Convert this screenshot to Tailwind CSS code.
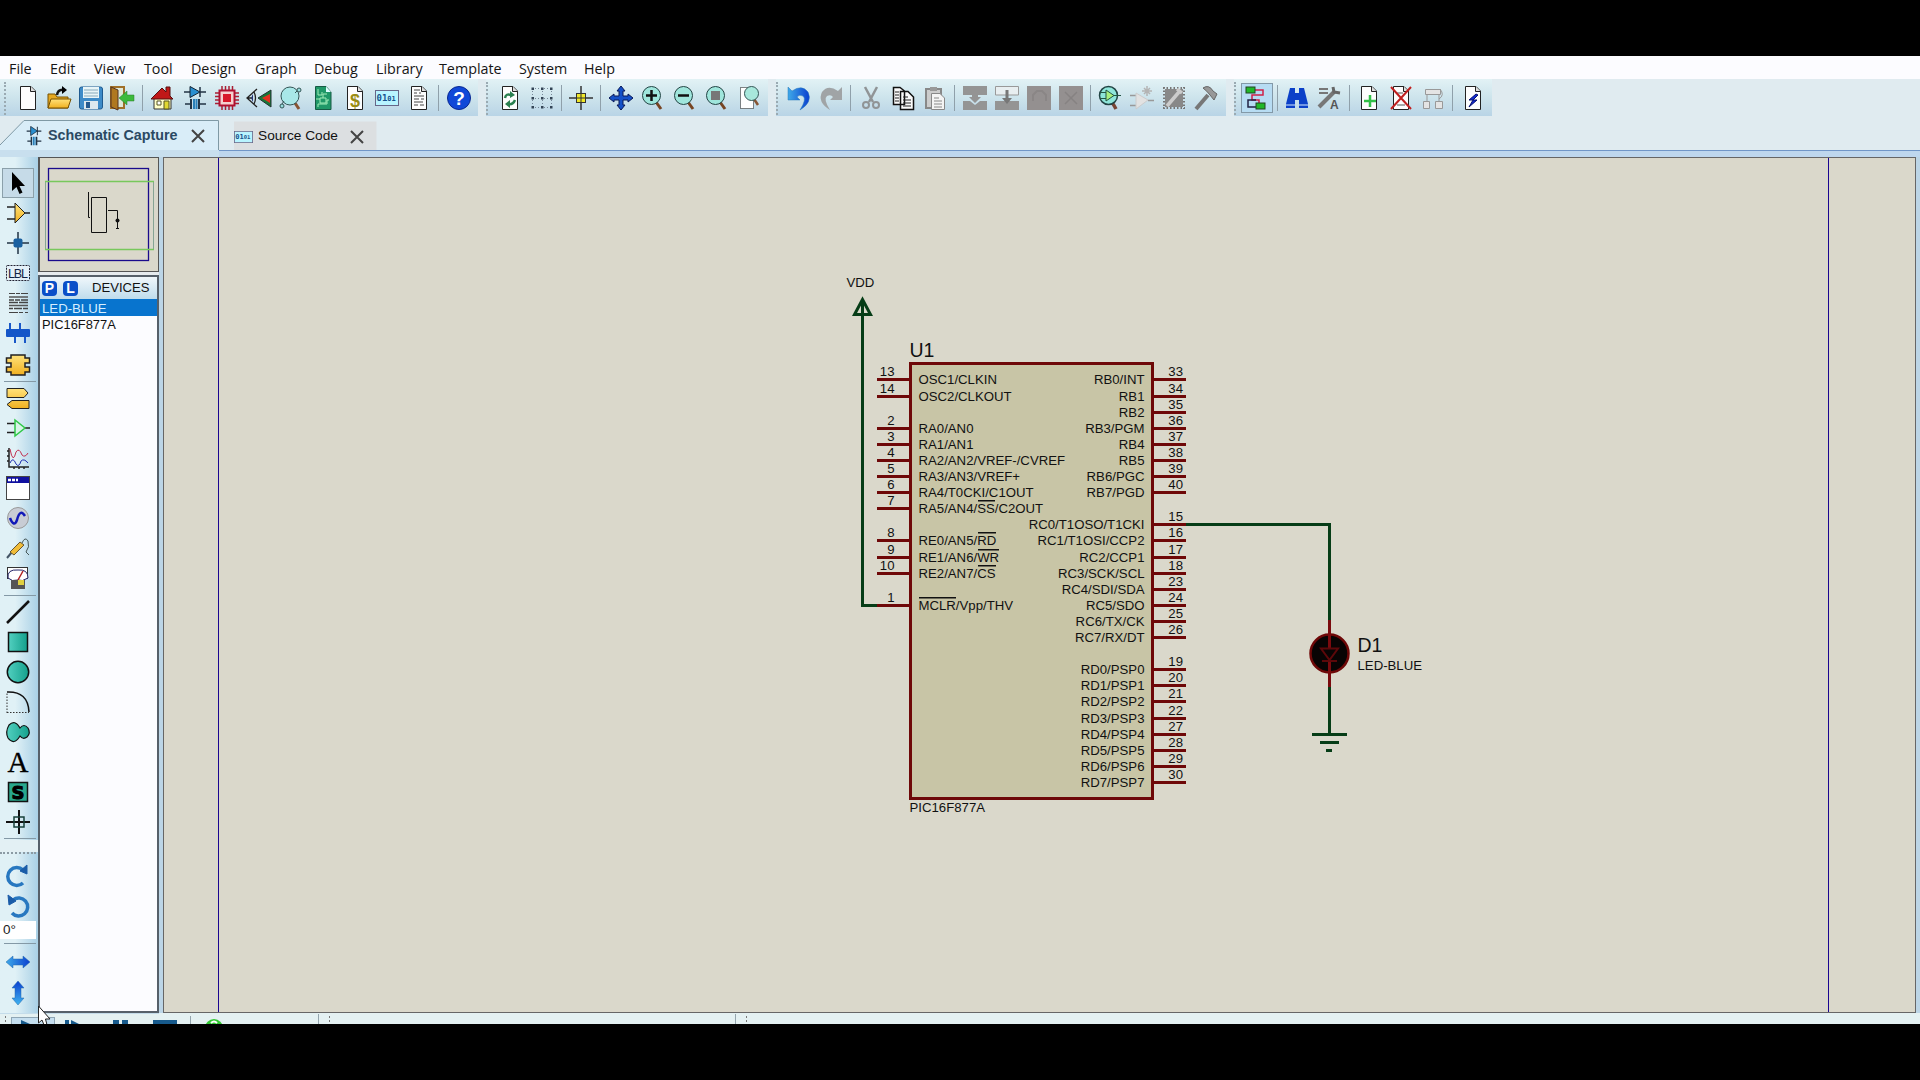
<!DOCTYPE html>
<html lang="en">
<head>
<meta charset="utf-8">
<title>Schematic Capture</title>
<script src="https://cdn.jsdelivr.net/npm/@tailwindcss/browser@4"></script>
</head>
<body class="w-[1920px] h-[1080px] overflow-hidden bg-black font-['Liberation_Sans',Arial,sans-serif]">
<svg width="0" height="0" class="absolute">
  <defs>
    <linearGradient id="gb" x1="0" x2="1"><stop offset="0" stop-color="#3fa9e8"/><stop offset="1" stop-color="#0a3fd0"/></linearGradient>
    <linearGradient id="gv" x1="0" x2="0" y1="0" y2="1"><stop offset="0" stop-color="#0a3fd0"/><stop offset="1" stop-color="#3fb4f0"/></linearGradient>
    <linearGradient id="gt" x1="0" x2="1"><stop offset="0" stop-color="#52d0c0"/><stop offset="1" stop-color="#14a08c"/></linearGradient>
    <linearGradient id="gy" x1="0" x2="0" y1="0" y2="1"><stop offset="0" stop-color="#ffe27a"/><stop offset="1" stop-color="#f0b020"/></linearGradient>
  </defs>
</svg>
<div class="flex flex-col mt-14 w-full h-[968px] overflow-hidden bg-[#e0ebf0]">
  <nav class="flex shrink-0 h-[23px] bg-[#fcfcff] pl-[9px] text-[14.3px] leading-[25px] font-['Open_Sans','Noto_Sans',sans-serif] text-[#151515] whitespace-nowrap">
    <span class="w-[41px]">File</span><span class="w-11">Edit</span><span class="w-[50px]">View</span><span class="w-[47px]">Tool</span><span class="w-16">Design</span><span class="w-[59px]">Graph</span><span class="w-[62px]">Debug</span><span class="w-[63px]">Library</span><span class="w-20">Template</span><span class="w-[65px]">System</span><span>Help</span>
  </nav>
  <div id="bars" class="flex shrink-0 h-[37px]"></div>
  <div class="flex shrink-0 h-[34px] relative">
    <svg class="absolute left-0 top-0" width="1920" height="34"><path d="M0 29 24 4.500H218.500V34H0Z" fill="#d9edf8"/><path d="M0 29 24 4.500H218.500V34" fill="none" stroke="#7f99a5"/><path d="M234 5.500H376.500V34H234Z" fill="#dcdfe1"/></svg>
    <div class="relative flex items-center w-[219px] pl-[26px] pt-[6px] text-[14.3px] font-bold text-[#2b4963]"><span id="tab1" class="w-4 mr-[6px]"></span><span class="w-[131px] whitespace-nowrap">Schematic Capture</span>
      <svg class="ml-3" width="14" height="14"><path d="M1 1 13 13M13 1 1 13" stroke="#444" stroke-width="2"/></svg></div>
    <div class="relative flex items-center pl-[15px] pt-[7px] text-[13.7px] text-[#111]"><span id="tab2" class="w-[18px] mr-[6px]"></span><span class="w-[79px] whitespace-nowrap">Source Code</span>
      <svg class="ml-[13px]" width="14" height="14"><path d="M1 1 13 13M13 1 1 13" stroke="#444" stroke-width="2"/></svg></div>
  </div>
  <div class="flex shrink-0 h-[7px]"><div class="w-[219px] bg-[#c8dfee]"></div><div class="grow border-t border-[#7096c8] bg-[#bed7ee]"></div></div>
  <div class="flex shrink-0 h-[856px] bg-[#bcd5e6]">
    <aside id="tools" class="flex flex-col w-[38px] shrink-0 pt-[11px] bg-linear-to-r from-[#e0f1f6] from-40% to-[#a9d0e6]"></aside>
    <div class="flex flex-col shrink-0 w-[121px]">
      <svg class="shrink-0 bg-[#dad8cb] border border-[#555] border-l-2" width="121" height="115" viewBox="40 158 118 113"><rect x="48.500" y="168.500" width="100" height="92" fill="none" stroke="#1a0a8c" stroke-width="1.300"/><path d="M45.500 181.500V249.500M153.500 181.500V249.500" stroke="#86a494"/><path d="M45 181.500H154M45 249.500H154" stroke="#78c85c" stroke-width="1.300"/><path d="M88.500 192V217.500H90M91.500 197.500H106.500V232.500H91.500ZM108 210.500H117.500V229M116 219.500H119M116 228.500H119" fill="none" stroke="#111"/><circle cx="117.500" cy="220.500" r="2" fill="#111"/></svg>
      <div class="h-[3px] bg-[#e6ebee]"></div>
      <div class="flex flex-col grow border-2 border-[#56606a] bg-[#fcfcff] text-[#111]">
        <div class="flex items-center h-[22px] pl-[2px] bg-linear-to-b from-[#f0f7fb] to-[#bfdcec]">
          <b class="grid place-items-center w-[15px] h-[15px] rounded bg-[#0a4fc8] text-white text-sm leading-none">P</b>
          <b class="grid place-items-center w-[15px] h-[15px] rounded bg-[#0a4fc8] text-white text-sm leading-none ml-[6px]">L</b>
          <span class="ml-[14px] text-[13.1px]">DEVICES</span>
        </div>
        <div class="h-[17px] pl-[2px] bg-[#0874ce] text-[#d8efff] text-[13.200px] leading-[19px]">LED-BLUE</div>
        <div class="h-[17px] pl-[2px] text-[12.900px] leading-[17px]">PIC16F877A</div>
      </div>
    </div>
    <main class="ml-1 w-[1753px] h-full border border-[#666] bg-[#dad8cb]">
      <svg id="sch" width="1751" height="854" viewBox="164 158 1751 854" font-size="13.200" fill="#111" class="block"></svg>
    </main>
  </div>
  <div class="flex shrink-0 h-[11px] bg-[#e4f1f2]">
    <svg width="1920" height="11" viewBox="0 1013 1920 11"><path d="M0 1013H159V1014H0Z" fill="#c4dcea"/><rect x="11.500" y="1017.500" width="43" height="12" fill="#c5dff0" stroke="#8fa6b5"/><path d="M21 1020 30 1024H21ZM65 1020H69V1024H65ZM71 1020 79 1024H71ZM113 1020H119V1024H113ZM122 1020H128V1024H122ZM153 1020H177V1024H153Z" fill="#175a8c"/><circle cx="214" cy="1028" r="9" fill="#32c832"/><path d="M211 1023Q214 1020 217 1023" stroke="white" stroke-width="2" fill="none"/><path d="M190.500 1016V1024M318.500 1014V1024M735.500 1014V1024" stroke="#94a5ad"/><path d="M5.500 1016V1024M329.500 1016V1024M746.500 1016V1024" stroke="#777" stroke-dasharray="2 2"/></svg>
  </div>
</div>
<svg class="absolute left-[37px] top-[1005px]" width="20" height="19" viewBox="0 0 20 19"><path d="M1.500 1V18L5 15 7 20H10L8.500 14H13Z" fill="#fff" stroke="#222"/></svg>
<script>
const page = '<path d="M4.500.500H15L19.500 5V23.500H4.500Z" fill="#fdfdfd" stroke="#222"/><path d="M14.500.500V5.500H19.500" fill="#ddd" stroke="#222"/>';
const lens = '<path d="M15 16 20 23" stroke="#774422" stroke-width="3"/><circle cx="10.500" cy="9.500" r="9" fill="#9fe6dc" stroke="#244"/>';
const dev = '<path d="M1 6H7M17 6H23M2 18H8M15 18H23M17 1V11" stroke="#234" stroke-width="1.500"/><path d="M7 .500V11.500L17 6Z" fill="#2a8fd0" stroke="#123"/><path d="M8 13V23M16 13V23" stroke="#234" stroke-width="2"/><path d="M11 13V23M13.500 13V23" stroke="#2a7fb8" stroke-width="2"/>';
const bin = '<rect x=".500" y="4.500" width="23" height="15" fill="#b8f4ff" stroke="#668"/><text x="1.500" y="15" font-family="DejaVu Sans Mono" font-weight="bold" font-size="9" fill="#17518c">01<tspan font-size="7">01</tspan></text>';
const I = {
 new: page,
 open: '<path d="M1 22V8H8L10 11H21V22Z" fill="#e5a820" stroke="#765000"/><path d="M1 22 4 13H24L21 22Z" fill="url(#gy)" stroke="#765000"/><path d="M10 9Q11 3 17 4" fill="none" stroke="#111" stroke-width="2.500"/><path d="M15 0 20 4 15 8Z"/>',
 save: '<rect x=".500" y="1" width="23" height="22" rx="2" fill="#3d8bc8" stroke="#1f5b90"/><rect x="4" y="1" width="16" height="11" fill="#e8f5f8"/><path d="M5 4H19M5 7H19M5 10H19" stroke="#8ab"/><rect x="5" y="15" width="14" height="8" fill="#dce8ee"/><rect x="7" y="16" width="4" height="6" fill="#245a90"/>',
 exit: '<path d="M1 1H14V22H1Z" fill="#dfe8d8" stroke="#a07028" stroke-width="2"/><path d="M1 1 8 4V24L1 21Z" fill="#b07820" stroke="#532"/><path d="M24 9V15H17V19L9 12 17 5V9Z" fill="#3cba3c" stroke="#287828" stroke-width=".500"/>',
 home: '<path d="M3 12H20V23H3Z" fill="#ffffc8" stroke="#333"/><path d="M0 13 11 2 15 6V1H19V10L22 13Z" fill="#c01818" stroke="#511"/><path d="M6 15H10V19H6Z" fill="#fff" stroke="#552"/><path d="M13 15H18V23H13Z" fill="#e0d830" stroke="#552"/>',
 dev,
 pcb: '<path d="M7 0V24M10.500 0V24M14 0V24M17.500 0V24M0 7H24M0 10.500H24M0 14H24M0 17.500H24" stroke="#a82035" stroke-width="1.500"/><rect x="4.500" y="4.500" width="15" height="15" fill="#f5d0d0" stroke="#b01030" stroke-width="2"/><rect x="8" y="8" width="8" height="8" fill="#d8182a"/>',
 eye: '<path d="M10 3 0 12 10 21M1 12H5M7 6Q10 12 7 18" fill="none" stroke="#222" stroke-width="1.300"/><path d="M6 8V16Q3 12 6 8" fill="#237"/><path d="M11 12 24 4V21Z" fill="#187838" stroke="#233"/><path d="M15 12 23 8V17Z" fill="#e53020"/>',
 find: '<path d="M16 17 20 23" stroke="#853" stroke-width="3"/><circle cx="11" cy="10" r="9" fill="#a8e8e8" stroke="#355"/><circle cx="3" cy="20" r="2" fill="#9dd" stroke="#355"/><circle cx="20" cy="4" r="2" fill="#9dd" stroke="#355"/><path d="M3 18 5 15M18 5 16 7" stroke="#355"/>',
 board: '<path d="M4.500 .500H15L20 6V23.500H4.500Z" fill="#209868" stroke="#175a45"/><path d="M15 .500V6H20Z" fill="#dff"/><path d="M7 3V9H11V6M7 21V18H16V14H18M9 12H15V17H9ZM5 13H9M12 12V8H16" fill="none" stroke="#a0edb8"/>',
 bom: page+'<text x="7" y="21" font-size="18" font-weight="bold" fill="#9a8c14">$</text>',
 bin,
 rep: page+'<path d="M7 4H13M7 7H10M12 7H14M7 10H17M7 13H12M14 13H17M7 16H16M7 19H11M13 19H17" stroke="#444"/>',
 help: '<circle cx="12" cy="12" r="11.500" fill="#1048d8" stroke="#092890"/><text x="12" y="19" text-anchor="middle" font-size="19" font-weight="bold" fill="#fff">?</text>',
 refresh: page+'<path d="M7 12Q8 7 13 9M17 14Q15 19 10 18" fill="none" stroke="#2a8050" stroke-width="2.500"/><path d="M12 5 17 9 12 12ZM12 14 7 18 12 22Z" fill="#2a8050"/>',
 grid: '<path d="M2 2.500H22M2 12.500H22M2 21.500H22M2.500 2V22M12.500 2V22M21.500 2V22" stroke="#789" stroke-dasharray="1 2"/><path d="M1.500 1.500h2.500v2.500h-2.500zM11 1.500h2.500v2.500h-2.500zM20 1.500h2.500v2.500h-2.500zM1.500 11h2.500v2.500h-2.500zM11 11h2.500v2.500h-2.500zM20 11h2.500v2.500h-2.500zM1.500 20h2.500v2.500h-2.500zM11 20h2.500v2.500h-2.500zM20 20h2.500v2.500h-2.500z" fill="#345"/>',
 origin: '<path d="M0 12H24M12 0V24" stroke="#333" stroke-width="1.500"/><rect x="7.500" y="7.500" width="9" height="9" fill="#f0e828" stroke="#333"/><path d="M12 7V17M7 12H17" stroke="#333"/>',
 pan: '<path d="M12 0 16 5H14V10H19V8L24 12 19 16V14H14V19H16L12 24 8 19H10V14H5V16L0 12 5 8V10H10V5H8Z" fill="#1450c8" stroke="#081858"/>',
 zin: lens+'<path d="M5 9.500H16M10.500 4V15" stroke="#111" stroke-width="2.500"/>',
 zout: lens+'<path d="M5 9.500H16" stroke="#111" stroke-width="2.500"/>',
 zall: lens+'<rect x="6" y="5" width="9" height="9" fill="#777"/>',
 zarea: '<rect x="1.500" y="1.500" width="13" height="21" fill="#fff" stroke="#111" stroke-dasharray="1 1"/><path d="M15 13 19 19" stroke="#853" stroke-width="2.500"/><circle cx="12.500" cy="7.500" r="7" fill="#a8e8dc" stroke="#355"/>',
 undo: '<path d="M1 1 5 5Q15-2 21 6 26 16 13 24 20 13 16 10 12 8 10 11L13 14H1Z" fill="url(#gb)" stroke="#2878b8" stroke-width=".500"/>',
 redo: '<path d="M23 1 19 5Q9-2 3 6-2 16 11 24 4 13 8 10 12 8 14 11L11 14H23Z" fill="#a0a4a6"/>',
 cut: '<path d="M6 1 14 16M18 1 10 16" stroke="#909496" stroke-width="2.500"/><circle cx="7" cy="19" r="3" fill="none" stroke="#909496" stroke-width="2"/><circle cx="17" cy="19" r="3" fill="none" stroke="#909496" stroke-width="2"/>',
 copy: '<path d="M2.500 1.500H9L13.500 5V18.500H2.500ZM9.500 5.500H17L22.500 11V23.500H9.500Z" fill="#fafafa" stroke="#111" stroke-width="1.500"/><path d="M4 6H8M4 9H8M4 12H8M4 15H8M12 11H17M12 14H20M12 17H20M12 20H20" stroke="#222"/>',
 paste: '<path d="M3 3H18V22H3Z" fill="#ccc" stroke="#888" stroke-width="2"/><path d="M7 1H14V5H7Z" fill="#999"/><path d="M8.500 7.500H17L21.500 12V23.500H8.500Z" fill="#f4f4f4" stroke="#888"/><path d="M11 12H16M11 15H19M11 18H19M11 21H19" stroke="#888"/>',
 bcopy: '<path d="M0 0H24V9H15V11H18L12 17 6 11H9V9H0ZM0 15H7L12 19 17 15H24V24H0Z" fill="#949494"/>',
 bmove: '<path d="M.500 9V.500H23.500V9Z" fill="#e8eef0" stroke="#999"/><path d="M0 15H24V24H0Z" fill="#949494"/><path d="M10.500 4H13.500V12H17L12 18 7 12H10.500Z" fill="#777"/>',
 brot: '<rect width="24" height="24" fill="#949090"/><path d="M6 15V9L10 5H15L19 9V15" fill="none" stroke="#8a8686" stroke-width="2"/>',
 bdel: '<rect width="24" height="24" fill="#949090"/><path d="M6 6 18 18M18 6 6 18" stroke="#868282" stroke-width="1.500"/>',
 pick: '<path d="M14 16 18 23" stroke="#743" stroke-width="3.500"/><circle cx="10.500" cy="9.500" r="9" fill="#8ee6da" stroke="#244" stroke-width="1.500"/><path d="M2 6.500H8M2 12.500H8M14 9.500H23" stroke="#254"/><path d="M8 4V15L16 9.500Z" fill="#a8f080" stroke="#254"/>',
 make: '<path d="M0 9.500H6M0 19.500H6M18 14.500H24" stroke="#999" stroke-width="1.300"/><path d="M6 7V23L18 14Z" fill="#e2e2e2" stroke="#ccc"/><path d="M17 0V10M12 5H22M14 2 20 8M20 2 14 8" stroke="#b4b4b4" stroke-width="1.500"/>',
 pack: '<rect x="3" y="3" width="18" height="18" fill="#888"/><path d="M1 2H23M1 22H23M2 1V23M22 1V23" stroke="#777" stroke-width="2" stroke-dasharray="1.500 2"/><path d="M5 20 17 6M15 3 20 7" stroke="#ccc" stroke-width="3.500"/>',
 hammer: '<path d="M2 23 14 9" stroke="#777" stroke-width="4"/><path d="M9 2Q15-2 19 5L23 8 20 14 16 9Q13 5 9 2Z" fill="#989898" stroke="#666"/>',
 wire: '<path d="M10 4H18V9H7V14H14M11 14H14V18" fill="none" stroke="#d02048" stroke-width="1.500"/><path d="M11 14H3V21H12" fill="none" stroke="#224" stroke-width="1.500"/><rect x="1" y="1" width="9" height="6" fill="#20b828" stroke="#242"/><rect x="11" y="17" width="9" height="6" fill="#20b828" stroke="#242"/>',
 bino: '<path d="M5 2H10V7H14V2H19L23 18V22H14V14H10V22H1V18Z" fill="#0b40c8"/><path d="M1 19H10M14 19H23" stroke="#d8ecff"/>',
 tool: '<path d="M2 3H11M2 7H11" stroke="#777" stroke-width="2"/><path d="M2 21 18 5" stroke="#777" stroke-width="4"/><path d="M16 1 17 6 23 7" fill="none" stroke="#666" stroke-width="3"/><text x="13" y="23" font-weight="bold" font-size="12" fill="#555">A</text>',
 add: page+'<path d="M7 15H19M13 9V21" stroke="#32c048" stroke-width="2.500"/>',
 del: page+'<path d="M8 7H14M8 19H16M7 17 11 13" stroke="#555"/><path d="M2 1 22 23M22 1 2 23" stroke="#c02020" stroke-width="2"/>',
 tree: '<path d="M4.500 3.500H19.500V8.500H4.500ZM2.500 15.500H8.500V22.500H2.500ZM14.500 15.500H21.500V22.500H14.500Z" fill="#e4e4e4" stroke="#999"/><path d="M6 9V15M18 9V15M19 3Q24 9 18 13" fill="none" stroke="#999"/>',
 erc: page+'<path d="M15 8 8 14H12L8 21 16 14H12L17 9Z" fill="#1028d0" stroke="#081070"/>',
 ptr: '<path d="M6 1V20L10.500 16 13.500 23 16.500 21.500 13.500 15H19Z"/>',
 comp: '<path d="M1 6H9M1 18H9M19 12H24" stroke="#222" stroke-width="1.500"/><path d="M9 2V22L19 12Z" fill="url(#gy)" stroke="#222"/>',
 junc: '<path d="M1 12H23M12 1V23" stroke="#234" stroke-width="1.500"/><rect x="7.500" y="7.500" width="9" height="9" rx="2" fill="#1a60a0"/>',
 lbl: '<rect x=".500" y="4.500" width="23" height="15" rx="1" fill="#e4f0f8" stroke="#223" stroke-dasharray="2 1"/><text x="2" y="16.500" font-size="12.500" textLength="20" fill="#124">LBL</text>',
 script: '<path d="M3 2.500H9M10 2.500H14M15 2.500H22" stroke="#444"/><path d="M3 6H22M3 14.500H22" stroke="#555" stroke-width="1.600"/><path d="M3 9H8M9 9H14M15 9H22M3 11.500H12M13 11.500H22M3 17.500H7M8 17.500H16M17 17.500H22" stroke="#444" stroke-width="1.600"/><path d="M3 21.500H12M13 21.500H17M19 21.500H22" stroke="#444"/>',
 bus: '<path d="M4 2V12M14 2V12M9 12V22M19 12V22" stroke="#1a58c8" stroke-width="2"/><rect y="8" width="24" height="8" rx="1" fill="#1456c8"/>',
 sub: '<path d="M5 2H19V5H23.500V10H19V14H23.500V19H19V22H5V19H.500V14H5V10H.500V5H5Z" fill="url(#gy)" stroke="#222" stroke-width="1.500"/>',
 term: '<path d="M1 2.500H18L22 7 18 11.500H1ZM23 14.500H6L1 18.500 6 22.500H23Z" fill="url(#gy)" stroke="#222"/>',
 pin: '<path d="M1 7.500H9M1 16.500H9M19 12H24" stroke="#222" stroke-width="1.500"/><path d="M9 4V20L19 12Z" fill="#d8f4e8" stroke="#30c848" stroke-width="1.500"/>',
 graph: '<path d="M3 2V21H23M1 5H3M1 10H3M1 15H3M8 21V23M13 21V23M18 21V23" fill="none" stroke="#222" stroke-width="1.500"/><path d="M4 3Q7 19 10 6 13 1 16 9 19 12 22 7" fill="none" stroke="#c03050"/><path d="M4 17Q7 10 10 18 13 22 15 15 18 12 22 17" fill="none" stroke="#2030b0"/>',
 tape: '<rect x=".500" y=".500" width="23" height="23" fill="#fff" stroke="#444"/><rect x="1" y="1" width="22" height="6" fill="#1010a0"/><path d="M2 4H5M6 4H9M10 4H12" stroke="#fff" stroke-width="2.500"/>',
 gen: '<circle cx="12" cy="12" r="10.500" fill="#c8ccd4" stroke="#999"/><path d="M4 12Q8 22 11 14 14 2 19 10" fill="none" stroke="#1018b8" stroke-width="2.500"/>',
 probe: '<path d="M1 22 6 16" stroke="#456" stroke-width="2"/><path d="M4 16 14 6 18 9 8 19Z" fill="#f0bc38" stroke="#653"/><path d="M16 7Q19 0 22 5 24 11 20 16L23 19" fill="none" stroke="#455"/>',
 inst: '<rect x="1.500" y="1.500" width="20" height="11" fill="#fff" stroke="#333"/><path d="M2 12Q1 3 12 4 22 3 22 12Q16 16 12 14 6 16 2 12" fill="#fff" stroke="#226"/><path d="M12 14 17 5" stroke="#b02020" stroke-width="1.500"/><rect x="5" y="14" width="14" height="9" fill="#555"/><rect x="12" y="14" width="6" height="5" fill="#e0d040"/>',
 line: '<path d="M1 23 23 1" stroke="#111" stroke-width="2.500"/>',
 box: '<rect x="2.500" y="2.500" width="19" height="19" fill="url(#gt)" stroke="#111" stroke-width="1.500"/>',
 circ: '<circle cx="12" cy="12" r="10.700" fill="url(#gt)" stroke="#111" stroke-width="1.500"/>',
 arc: '<path d="M1 23V2M1 22.500H23" stroke="#333" stroke-dasharray="1.500 1.500" fill="none"/><path d="M1 2Q22 1 23 22" fill="none" stroke="#111" stroke-width="1.500"/>',
 blob: '<path d="M14 8Q18 3 22 8 25 13 21 17 17 20 14 16 8 26 2 18-1 12 3 5 9-1 14 8Z" fill="url(#gt)" stroke="#111" stroke-width="1.200"/>',
 txt: '<text x="12" y="22" text-anchor="middle" font-family="Liberation Serif" font-size="29" stroke="#000" stroke-width=".300">A</text>',
 sym: '<rect x="2.500" y="2.500" width="19" height="19" fill="#28a88c" stroke="#111" stroke-width="1.500"/><text x="12" y="18.500" text-anchor="middle" font-family="DejaVu Sans" font-weight="bold" font-size="18" stroke="#000">S</text>',
 mark: '<path d="M0 12H24M13 0V24" stroke="#111" stroke-width="2"/><rect x="8" y="7" width="10" height="10" fill="none" stroke="#17403a" stroke-width="1.500"/>',
 cw: '<path d="M17 19A9 9 0 1 1 17 6" fill="none" stroke="#2878c0" stroke-width="3.500"/><path d="M14 7 21 1V10Z" fill="#1a5ca8" stroke="#1a5ca8"/>',
 ccw: '<path d="M6 19A9 9 0 1 0 7 6" fill="none" stroke="#2878c0" stroke-width="3.500"/><path d="M10 7 2 1 3 11Z" fill="#1a5ca8" stroke="#1a5ca8"/>',
 hor: '<path d="M0 12 7 6V9H17V6L24 12 17 18V15H7V18Z" fill="url(#gb)" stroke="#2468a8" stroke-width=".500"/>',
 ver: '<path d="M12 0 18 7H15V17H18L12 24 6 17H9V7H6Z" fill="url(#gv)" stroke="#2468a8" stroke-width=".500"/>'
};
const svg = n => `<svg width="24" height="24" viewBox="0 0 24 24" class="shrink-0 overflow-visible">${I[n]}</svg>`;
const c32 = s => s.split(' ').map(n => `<span class="grid place-items-center w-8 h-full">${svg(n)}</span>`).join('');
const c31 = s => s.split(' ').map(n => `<span class="grid place-items-center w-[31.5px] h-full">${svg(n)}</span>`).join('');
const sep = '<span class="w-[7px] flex justify-center"><i class="w-px h-[26px] mt-[6px] bg-[#8fa0aa]"></i></span>';
const px = '<span class="w-px"></span>';
const grip = '<i class="w-0 h-[33px] mt-[3px] border-l-2 border-dotted border-[#9aaab2]"></i>';
const G = 'flex h-full bg-linear-to-b from-[#e2f2f5] via-[#cde4ec] to-[#b9d4e6]';
document.getElementById('bars').innerHTML =
 `<div class="${G} w-[478px] pl-1">${grip}<span class="w-[6px]"></span>${c31('new open save exit')}${px}${sep}${px}${c32('home dev pcb eye find board bom bin rep')}${sep}${px}${c32('help')}</div>
  <div class="${G} w-[282px] ml-2">${grip}<span class="w-[6px]"></span>${c32('refresh grid')}${sep}${c32('origin')}${sep}${px}${c32('pan zin zout zall')}<span class="w-[2px]"></span>${c32('zarea')}</div>
  <div class="${G} w-[450px] ml-2">${grip}<span class="w-[5px]"></span>${c32('undo redo')}${sep}${px}${c32('cut copy paste')}${sep}${px}${c32('bcopy bmove brot bdel')}${sep}${c32('pick make pack hammer')}</div>
  <div class="${G} w-[258px] ml-2">${grip}<span class="w-[5px]"></span><span class="grid place-items-center w-8 h-[30px] mt-1 border border-[#8399a8] bg-[#b7dcf3]">${svg('wire')}</span>${px}${sep}${c32('bino tool')}${px}${sep}${c32('add del tree')}${sep}${px}${c32('erc')}</div>`;
const row = s => s.split(' ').map(n => `<span class="grid place-items-center h-[30px] w-9">${svg(n)}</span>`).join('');
const hs = '<i class="h-px w-8 ml-1 my-px shrink-0 bg-[#8499a6]"></i>';
document.getElementById('tools').innerHTML =
 `<span class="grid place-items-center h-[30px] w-8 ml-[2px] border border-[#8ba0aa] bg-[#c6dbe8]">${svg('ptr')}</span>${row('comp junc lbl script bus')}<span class="h-[2px]"></span>${row('sub')}${hs}${row('term pin graph tape gen probe inst')}<span class="h-px"></span>${hs}${row('line box circ arc blob txt sym mark')}${hs}
  <span class="h-[12px] bg-[#e3f0f4]"></span><i class="h-0 w-9 border-t-2 border-dotted border-[#8c9ba4]"></i><span class="h-[7px]"></span>${row('cw ccw')}<span class="h-[18px] w-9 bg-white pl-[3px] text-[13.5px] leading-[17px] text-[#222]">0°</span><span class="h-[3px]"></span>${hs}<span class="h-[2px]"></span>${row('hor')}<span class="h-px"></span>${row('ver')}`;
document.getElementById('tab1').innerHTML = `<svg width="16" height="20" viewBox="0 0 24 24" preserveAspectRatio="none">${dev}</svg>`;
document.getElementById('tab2').innerHTML = `<svg width="19" height="18" viewBox="0 0 24 24" preserveAspectRatio="none">${bin}</svg>`;

// Pins: [number, y, label, start and width of an overbar]
const L = [[13,379,'OSC1/CLKIN'],[14,396,'OSC2/CLKOUT'],[2,428,'RA0/AN0'],[3,444,'RA1/AN1'],[4,460,'RA2/AN2/VREF-/CVREF'],[5,476,'RA3/AN3/VREF+'],[6,492,'RA4/T0CKI/C1OUT'],[7,508,'RA5/AN4/SS/C2OUT',978,17],[8,540,'RE0/AN5/RD',978,18],[9,557,'RE1/AN6/WR',978,21],[10,573,'RE2/AN7/CS',978,18],[1,605,'MCLR/Vpp/THV',919,37]];
const R = [[33,379,'RB0/INT'],[34,396,'RB1'],[35,412,'RB2'],[36,428,'RB3/PGM'],[37,444,'RB4'],[38,460,'RB5'],[39,476,'RB6/PGC'],[40,492,'RB7/PGD'],[15,524,'RC0/T1OSO/T1CKI'],[16,540,'RC1/T1OSI/CCP2'],[17,557,'RC2/CCP1'],[18,573,'RC3/SCK/SCL'],[23,589,'RC4/SDI/SDA'],[24,605,'RC5/SDO'],[25,621,'RC6/TX/CK'],[26,637,'RC7/RX/DT'],[19,669,'RD0/PSP0'],[20,685,'RD1/PSP1'],[21,701,'RD2/PSP2'],[22,718,'RD3/PSP3'],[27,734,'RD4/PSP4'],[28,750,'RD5/PSP5'],[29,766,'RD6/PSP6'],[30,782,'RD7/PSP7']];
let o = `<path d="M218.500 158V1012M1828.500 158V1012" stroke="#1a0590" stroke-width="1"/>
 <rect x="910.500" y="363.500" width="242" height="435" fill="#c8c5a6" stroke="#6e0808" stroke-width="3"/>
 <path d="M862.500 300V605.500H877M862.500 299.500 854.500 314.500H870.500ZM1186 524.500H1329.500V620M1329.500 687V735M1312 734.500H1347M1320 742.500H1339M1326 750.500H1332" fill="none" stroke="#063d17" stroke-width="3"/>
 <circle cx="1329.500" cy="653.500" r="19" fill="#080404" stroke="#6e0808" stroke-width="2.500"/>
 <path d="M1329.500 620V648M1329.500 660V687" stroke="#7a0a0e" stroke-width="3"/><path d="M1321 648.500H1338L1329.500 660ZM1322 661H1337" fill="none" stroke="#5c080a" stroke-width="2"/>
 <text x="846.500" y="287">VDD</text><text x="909.500" y="357" font-size="19.500">U1</text><text x="909.500" y="812">PIC16F877A</text><text x="1357.500" y="652" font-size="19.500">D1</text><text x="1357.500" y="670">LED-BLUE</text>`;
for (const [n,y,t,bx,bw] of L) o += `<path d="M877 ${y+.5}H909" stroke="#6e0808" stroke-width="3"/><text x="894.500" y="${y-3}" text-anchor="end">${n}</text><text x="918.500" y="${y+4.5}">${t}</text>` + (bx ? `<rect x="${bx}" y="${y-8}" width="${bw}" height="1.500"/>` : '');
for (const [n,y,t] of R) o += `<path d="M1154 ${y+.5}H1186" stroke="#6e0808" stroke-width="3"/><text x="1183" y="${y-3}" text-anchor="end">${n}</text><text x="1144.500" y="${y+4.5}" text-anchor="end">${t}</text>`;
document.getElementById('sch').innerHTML = o;
</script>
</body>
</html>
